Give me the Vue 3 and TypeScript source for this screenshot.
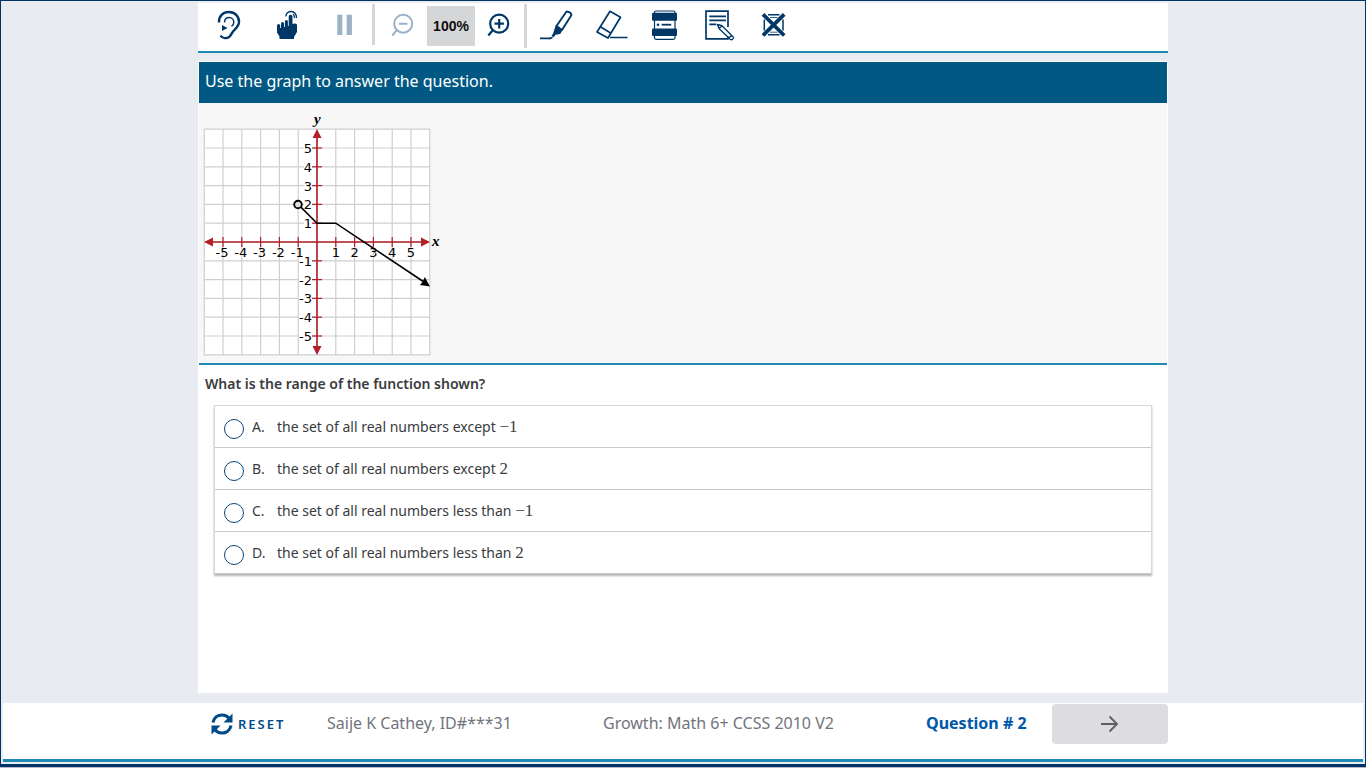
<script setup lang="ts">
import { ref } from 'vue'

interface Option {
  letter: string
  text: string
  value: string
}

const options: Option[] = [
  { letter: 'A', text: 'the set of all real numbers except', value: '−1' },
  { letter: 'B', text: 'the set of all real numbers except', value: '2' },
  { letter: 'C', text: 'the set of all real numbers less than', value: '−1' },
  { letter: 'D', text: 'the set of all real numbers less than', value: '2' },
]

const answer = ref<string>('')

// Graph geometry: one unit is 18.8 drawing units, origin at (117, 131)
const unit = 18.8
const px = (x: number): number => 117 + x * unit
const py = (y: number): number => 131 - y * unit
const gridLines = Array.from({ length: 13 }, (_, i) => i - 6)
const ticks = [-5, -4, -3, -2, -1, 1, 2, 3, 4, 5]
</script>

<template>
  <div class="frame">
    <header class="toolbar">
      <div class="group first">
        <button type="button" class="tool wide" aria-label="Read aloud">
          <svg viewBox="0 0 36 36">
            <path class="line" stroke-width="2.4" d="M8 15.5C7.6 9 12 5 18 5c6 0 10 4.500 10 9.800 0 4.200-2.400 6-5 8.500-2.300 2.300-2.500 4.500-4.500 6.300-2.800 2.400-6.800 2-9-1" />
            <path class="line" stroke-width="1.500" d="M13.500 15.500c0-3 2-4.900 4.700-4.900s4.600 2 4.600 4.700c0 1.900-.9 3.200-2.300 4" />
            <path class="fill" d="M11 18l5.500 3-5.500 3z" />
          </svg>
        </button>
        <button type="button" class="tool wide" aria-label="Touch to read">
          <svg viewBox="0 0 36 36">
            <path class="fill" d="M9 18.500q0-1.500 1.600-1.500t1.600 1.500V21h.8v-4.500q0-1.500 1.500-1.500t1.500 1.500V20h.9v-5.500q0-1.500 1.500-1.500t1.500 1.500V19h.8V9.500q0-1.700 1.900-1.700t1.900 1.700V17q3.600-1.200 4.500.8V25l-3 5v2H11.500v-2.500L9 25.500z" />
            <path class="line" stroke-width="1.300" d="M17.700 9.500c.5-3 2.500-5 5.500-5s5.500 2.500 5.300 6.500M25 7c1.200.8 1.500 2 1.500 4" />
          </svg>
        </button>
        <button type="button" class="tool wide faded" aria-label="Pause" disabled>
          <svg viewBox="0 0 36 36"><path class="fill" d="M12.300 7.700h5V28h-5zM21.700 7.700h5.200V28h-5.200z" /></svg>
        </button>
      </div>
      <span class="divider"></span>
      <div class="group zoom">
        <button type="button" class="tool small faded" aria-label="Zoom out" disabled>
          <svg viewBox="0 0 36 36">
            <circle class="line" cx="18.200" cy="16.700" r="9" stroke-width="2" />
            <path class="line" stroke-width="2" d="M14 16.700h8.500M11.800 23.200l-4.500 5.300" />
          </svg>
        </button>
        <span class="level">100%</span>
        <button type="button" class="tool small" aria-label="Zoom in">
          <svg viewBox="0 0 36 36">
            <circle class="line" cx="18.200" cy="16.700" r="9" stroke-width="2.200" />
            <path class="line" stroke-width="2.200" d="M13.500 16.700h9.400M18.200 12v9.400M11.800 23.200l-4.500 5.300" />
          </svg>
        </button>
      </div>
      <span class="divider tall"></span>
      <div class="group marks">
        <button type="button" class="tool" aria-label="Highlighter">
          <svg viewBox="0 0 36 36">
            <path class="line" stroke-width="1.900" stroke-linejoin="round" d="M28.500 4.500q4.300.3 5 3.500L24 23l-5.500-4z" />
            <path class="fill" d="M17.700 18.300l7 4.800-2.500 4-4.700.7-1.800 2.500-2.200-1.300 1.700-2.700z" />
            <path class="line" stroke-width="1.800" d="M2 31.300h9.300M11 31.500c1.500 0 2-1.300 3.500-.5" />
          </svg>
        </button>
        <button type="button" class="tool" aria-label="Eraser">
          <svg viewBox="0 0 36 36">
            <path class="line" stroke-width="1.700" stroke-linejoin="round" d="M18 4.300l10.500 6L16 31 5 25zM8.300 19.700l10.700 6.500M18 30.500h17.500" />
          </svg>
        </button>
        <button type="button" class="tool" aria-label="Line reader">
          <svg viewBox="0 0 36 36">
            <rect class="line" x="8.500" y="4" width="20.500" height="28.300" rx="1.500" stroke-width="1.200" />
            <rect class="fill" x="6" y="5.700" width="25" height="8" rx="1" />
            <rect class="fill" x="6" y="21.600" width="25" height="7.500" rx="1" />
            <circle class="fill" cx="12" cy="17.700" r="1.300" />
            <path class="line" stroke-width="1.800" d="M15.700 17.700h9.500" />
          </svg>
        </button>
        <button type="button" class="tool" aria-label="Notepad">
          <svg viewBox="0 0 36 36">
            <path class="line" stroke-width="1.700" d="M28 20V4.200H6v27.600h22v-2.300" />
            <path class="line" stroke-width="1.700" d="M9.300 9.300H26M9.300 13.300H26M9.300 17.300h7" />
            <path class="line" stroke-width="1.300" stroke-linejoin="round" d="M17.500 17.500l4.500 1.200 11 11q1 1.200-.2 2.400t-2.600.2l-11-10.600zM18.800 21.700l3.200-3M29 31l3-3" />
            <path class="fill" d="M17 17l3 .8-2 2.200z" />
          </svg>
        </button>
        <button type="button" class="tool" aria-label="Answer eliminator">
          <svg viewBox="0 0 36 36">
            <path class="line" stroke-width="1.500" d="M14 7.800h11.500M14 27.800h11.500M10.300 12.500v11M29 12.500v11" />
            <path class="line" stroke-width=".8" d="M16 10.500h7.500M16 25.200h7.500" />
            <path class="line" stroke-width="3.800" d="M9 7.300l21.200 21.200M30.200 7.300L9 28.500" />
          </svg>
        </button>
      </div>
    </header>

    <main class="page">
      <h1 class="prompt">Use the graph to answer the question.</h1>
      <section class="stimulus">
        <svg class="graph" viewBox="0 0 244 250" role="img" aria-label="Graph of the function">
          <rect x="4" y="18" width="226" height="226" fill="#fff" />
          <g stroke="#cfcfcf" stroke-width="1.200">
            <template v-for="n in gridLines" :key="n">
              <line :x1="px(n)" :x2="px(n)" y1="18" y2="244" />
              <line :y1="py(n)" :y2="py(n)" x1="4" x2="230" />
            </template>
          </g>
          <g fill="#fff">
            <rect v-for="n in ticks" :key="n" :x="n > 0 ? 104 : 99" :y="py(n) - 5" :width="n > 0 ? 9 : 13" height="10" />
          </g>
          <g stroke="#b22028">
            <g stroke-width="1.200">
              <template v-for="n in ticks" :key="n">
                <line :x1="px(n)" :x2="px(n)" y1="126" y2="136" />
                <line :y1="py(n)" :y2="py(n)" x1="112" x2="122" />
              </template>
            </g>
            <path stroke-width="1.600" d="M8 131h218M117 22v218" />
          </g>
          <path fill="#b22028" d="M4 131l9-4.500v9zM230 131l-9-4.500v9zM117 18l-4.500 9h9zM117 244l-4.500-9h9z" />
          <g class="labels">
            <text v-for="n in ticks" :key="'x' + n" :x="n > 0 ? px(n) : px(n) - 1" y="146" text-anchor="middle">{{ n }}</text>
            <text v-for="n in ticks" :key="'y' + n" x="112" :y="py(n) + 5" text-anchor="end">{{ n }}</text>
          </g>
          <path d="M98.200 93.400L117 112.200h18.800L224 171" fill="none" stroke="#000" stroke-width="1.600" />
          <path d="M230 175.500l-10-1.500 2.500-3 2.300-5z" />
          <circle cx="98" cy="93.500" r="3.800" fill="#ddd" stroke="#000" stroke-width="1.900" />
          <text class="axis" x="114" y="13">y</text>
          <text class="axis" x="232" y="135">x</text>
        </svg>
      </section>

      <form class="question" @submit.prevent>
        <h2 id="stem">What is the range of the function shown?</h2>
        <div class="options" role="radiogroup" aria-labelledby="stem">
          <label v-for="o in options" :key="o.letter" class="option">
            <input v-model="answer" type="radio" name="answer" :value="o.letter" />
            <span class="letter">{{ o.letter }}.</span>
            <span>{{ o.text }} <span class="math">{{ o.value }}</span></span>
          </label>
        </div>
      </form>
    </main>

    <footer class="footer">
      <div class="footer-inner">
        <button type="button" class="reset" @click="answer = ''">
          <svg viewBox="0 0 22 22">
            <path fill="none" stroke="#004b87" stroke-width="3.200" d="M2 9.500C3 4.500 7 2 11 2c3.300 0 5.500 1.200 7.300 3.500M20 12.500c-1 5-5 7.500-9 7.500-3.300 0-5.500-1.200-7.300-3.500" />
            <path fill="#004b87" d="M21.500.5v9h-9zM.5 21.500v-9h9z" />
          </svg>
          RESET
        </button>
        <span class="info">Saije K Cathey, ID#***31</span>
        <span class="info">Growth: Math 6+ CCSS 2010 V2</span>
        <strong class="info count">Question # 2</strong>
        <button type="button" class="next" aria-label="Next question">
          <svg viewBox="0 0 20 18"><path fill="none" stroke="#5c5d60" stroke-width="1.800" d="M1 9h16M9.500 1.500L17 9l-7.500 7.500" /></svg>
        </button>
      </div>
    </footer>
  </div>
</template>

<style>
body {
  background: #b4bccb;
}
</style>

<style scoped>
.frame {
  box-sizing: border-box;
  min-height: calc(100vh - 1px);
  display: flex;
  flex-direction: column;
  background: #e8ebf0;
  border: 1px solid #003366;
  border-bottom-width: 3px;
  padding: 2px 2px 2px;
  font-family: "Noto Sans", "Open Sans", sans-serif;
  color: #3a3b40;
}
button {
  margin: 0;
  padding: 0;
  border: 0;
  background: none;
  font: inherit;
  cursor: pointer;
}
.toolbar,
.page,
.footer-inner {
  box-sizing: border-box;
  width: 100%;
  max-width: 970px;
  margin: 0 auto;
}
.toolbar {
  height: 50px;
  display: flex;
  align-items: flex-start;
  background: #fff;
  border-bottom: 2px solid #1f8ab4;
}
.group {
  display: flex;
  align-items: center;
  height: 44px;
}
.first {
  gap: 1px;
  padding-left: 3px;
}
.zoom {
  padding-left: 3px;
}
.marks {
  padding-left: 1px;
}
.tool {
  width: 54px;
  height: 44px;
  display: flex;
  align-items: center;
  justify-content: center;
  color: #003767;
}
.wide {
  width: 56px;
}
.small {
  width: 48px;
}
.faded {
  color: #9bb1c7;
}
.tool svg {
  width: 36px;
  height: 36px;
}
.line {
  fill: none;
  stroke: currentColor;
}
.fill {
  fill: currentColor;
}
.divider {
  width: 3px;
  height: 41px;
  margin: 1px 1px 0;
  background: #d5d6d8;
}
.tall {
  height: 44px;
}
.level {
  width: 48px;
  height: 40px;
  line-height: 40px;
  margin-top: 2px;
  background: #d5d6d8;
  color: #0c0c0c;
  font-family: "Liberation Sans", Arial, sans-serif;
  font-size: 14px;
  font-weight: 700;
  text-align: center;
}
.page {
  flex: 1;
  margin-top: 8px;
  margin-bottom: 10px;
  padding: 1px;
  background: #fff;
}
.prompt {
  margin: 0;
  padding: 0 6px;
  height: 41px;
  line-height: 38px;
  background: #005883;
  color: #fff;
  font-size: 16px;
  font-weight: 400;
}
.stimulus {
  padding: 8px 1px 2px;
  background: #f7f7f7;
  border-bottom: 2px solid #1f8ab4;
}
.graph {
  display: block;
  width: 244px;
  height: 250px;
}
.labels {
  font: 13px "DejaVu Sans", sans-serif;
}
.axis {
  font: italic bold 15px "Liberation Serif", serif;
}
.question {
  padding: 8px 15px 0;
}
.question h2 {
  margin: 0 0 0 -9px;
  font-size: 14px;
  line-height: 22px;
  font-weight: 600;
}
.options {
  margin-top: 10px;
  border: 1px solid #d9d9db;
  border-bottom: 0;
  box-shadow: 0 2px 2px rgba(0, 0, 0, 0.3);
}
.option {
  display: flex;
  align-items: center;
  height: 41px;
  padding-left: 9px;
  font-size: 14px;
  border-bottom: 1px solid #c8c9cb;
  cursor: pointer;
}
.option input {
  appearance: none;
  box-sizing: border-box;
  width: 20px;
  height: 20px;
  margin: 4px 8px 0 0;
  border: 1px solid #0f4577;
  border-radius: 50%;
}
.option input:checked {
  background: #004b87;
  box-shadow: inset 0 0 0 4px #fff;
}
.letter {
  width: 25px;
}
.math {
  font: 17px "Liberation Serif", serif;
}
.footer {
  height: 56px;
  background: #fff;
  border-bottom: 3px solid #1f8ab4;
}
.footer-inner {
  display: grid;
  grid-template-columns: 129px 276px 323px 1fr 116px;
  align-items: center;
  height: 42px;
  color: #71747c;
  font-size: 16px;
}
.info {
  padding-bottom: 2px;
}
.reset {
  display: flex;
  align-items: center;
  gap: 5px;
  padding-left: 13px;
  color: #004b87;
  font-size: 13px;
  font-weight: 600;
  letter-spacing: 2px;
}
.reset svg {
  width: 22px;
  height: 22px;
}
.count {
  color: #0059a8;
}
.next {
  display: flex;
  align-items: center;
  justify-content: center;
  height: 40px;
  background: #dddddf;
  border-radius: 4px;
}
.next svg {
  width: 20px;
  height: 18px;
}
</style>
